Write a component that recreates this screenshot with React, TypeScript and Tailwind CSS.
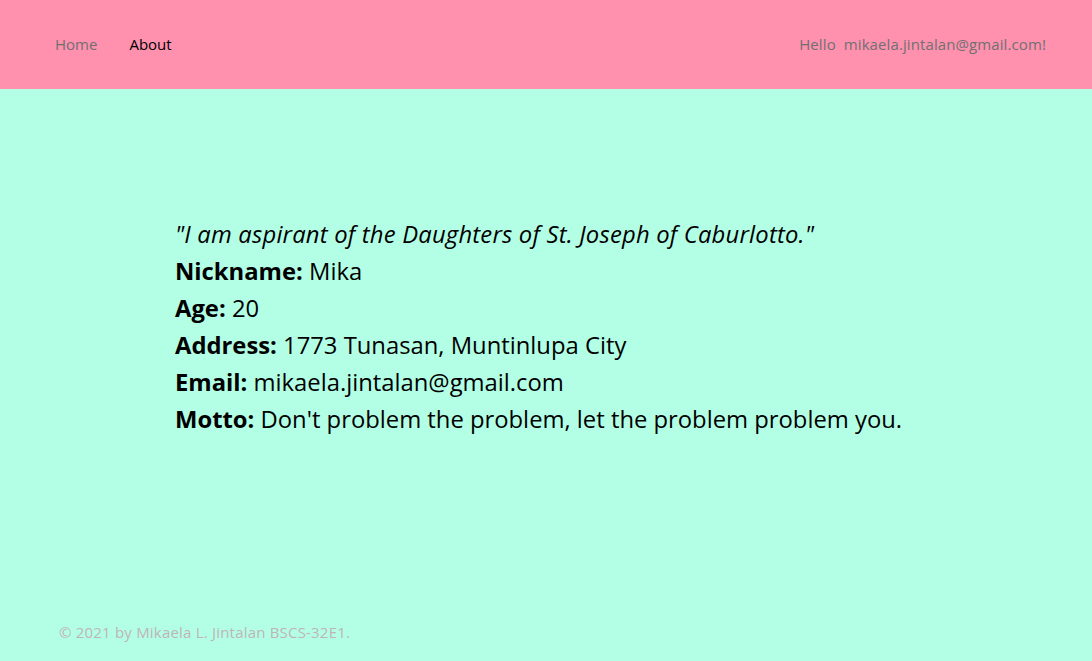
export default function App() {
  const font = { fontFamily: '"Open Sans", "Noto Sans", sans-serif' };
  return (
    <div className="min-h-[661px] bg-[#b3ffe5] flex flex-col" style={font}>
      <header className="h-[89px] bg-[#ff91af] flex items-center justify-between pl-[55px] pr-[46px] text-[15px]">
        <nav className="flex items-center gap-[32px]">
          <span className="text-[#6f6f6f]">Home</span>
          <span className="text-black">About</span>
        </nav>
        <div className="text-[#707070] tracking-[0.1px]">Hello&nbsp; mikaela.jintalan@gmail.com!</div>
      </header>
      <main className="flex-1 pl-[175px] pt-[127px] text-[23.8px] leading-[37px] text-black">
        <p className="italic tracking-[0.2px]">"I am aspirant of the Daughters of St. Joseph of Caburlotto."</p>
        <p><b>Nickname:</b> Mika</p>
        <p><b>Age:</b> 20</p>
        <p><b>Address:</b> 1773 Tunasan, Muntinlupa City</p>
        <p><b>Email:</b> mikaela.jintalan@gmail.com</p>
        <p><b>Motto:</b> Don't problem the problem, let the problem problem you.</p>
      </main>
      <footer className="pl-[59px] pb-[18px] text-[15px] tracking-[0.2px] text-[#c0b4b8]">© 2021 by Mikaela L. Jintalan BSCS-32E1.</footer>
    </div>
  );
}
